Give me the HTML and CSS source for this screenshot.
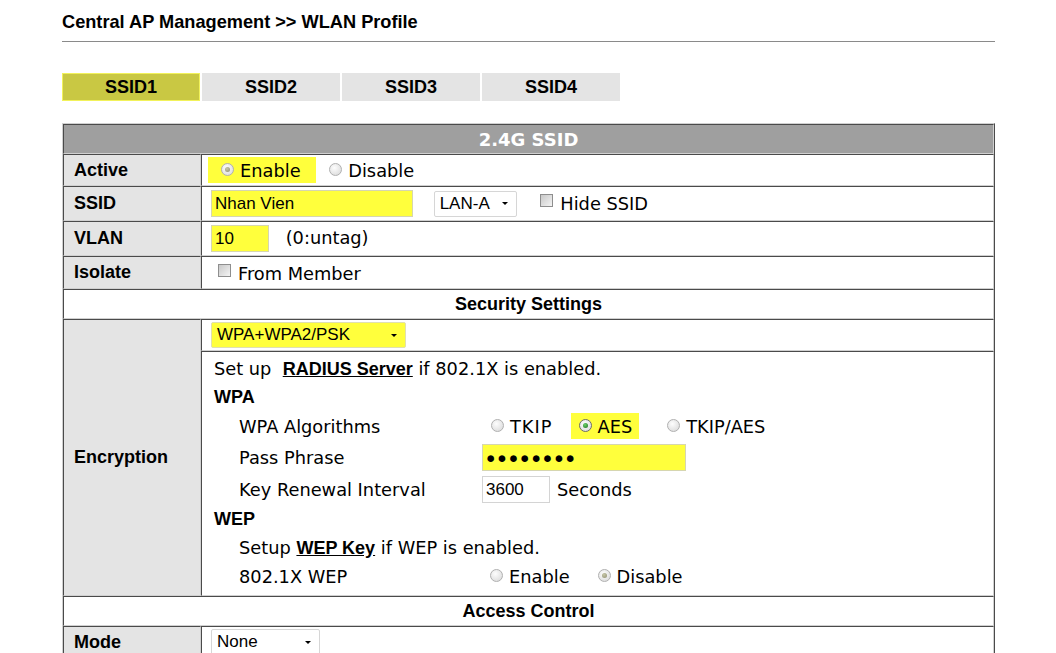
FILE: index.html
```html
<!DOCTYPE html>
<html lang="en">
<head>
    <meta charset="UTF-8" />
    <title>WLAN Profile</title>
    <link rel="stylesheet" href="styles.css">
</head>
<body>
    <div class="page">
        <div class="title">Central AP Management &gt;&gt; WLAN Profile</div>

        <div class="tabs">
            <div class="tab current">SSID1</div>
            <div class="tab">SSID2</div>
            <div class="tab">SSID3</div>
            <div class="tab">SSID4</div>
        </div>

        <table class="profile">
            <tr class="r-head">
                <td colspan="2" class="head">2.4G SSID</td>
            </tr>
            <tr class="r-active">
                <td class="label">Active</td>
                <td class="value">
                    <span class="hl hl-active"><span class="radio on dim"></span>Enable</span>
                    <span class="opt"><span class="radio"></span>Disable</span>
                </td>
            </tr>
            <tr class="r-ssid">
                <td class="label">SSID</td>
                <td class="value">
                    <span class="field yellow w-ssid">Nhan Vien</span>
                    <span class="select w-lan">LAN-A<span class="arrow"></span></span>
                    <span class="opt"><span class="check"></span>Hide SSID</span>
                </td>
            </tr>
            <tr class="r-vlan">
                <td class="label">VLAN</td>
                <td class="value">
                    <span class="field yellow w-vlan">10</span>
                    <span class="note">(0:untag)</span>
                </td>
            </tr>
            <tr class="r-isolate">
                <td class="label">Isolate</td>
                <td class="value">
                    <span class="opt first"><span class="check"></span>From Member</span>
                </td>
            </tr>
            <tr class="r-section">
                <td colspan="2" class="section">Security Settings</td>
            </tr>
            <tr class="r-enc">
                <td class="label" rowspan="2">Encryption</td>
                <td class="value">
                    <span class="select yellow w-enc">WPA+WPA2/PSK<span class="arrow"></span></span>
                </td>
            </tr>
            <tr class="r-detail">
                <td class="value detail">
                    <div class="line">Set up &nbsp;<a>RADIUS Server</a> if 802.1X is enabled.</div>
                    <div class="line sub">WPA</div>
                    <div class="pair p-alg">
                        <span class="key">WPA Algorithms</span>
                        <span class="opts">
                            <span class="opt o-tkip"><span class="radio"></span>TKIP</span>
                            <span class="hl hl-aes"><span class="radio on green"></span>AES</span>
                            <span class="opt"><span class="radio"></span>TKIP/AES</span>
                        </span>
                    </div>
                    <div class="pair">
                        <span class="key">Pass Phrase</span>
                        <span class="field yellow w-pass">&#9679;&#9679;&#9679;&#9679;&#9679;&#9679;&#9679;&#9679;</span>
                    </div>
                    <div class="pair">
                        <span class="key">Key Renewal Interval</span>
                        <span class="opts"><span class="field w-key">3600</span><span class="unit">Seconds</span></span>
                    </div>
                    <div class="line sub">WEP</div>
                    <div class="line indent l-wep">Setup <a>WEP Key</a> if WEP is enabled.</div>
                    <div class="pair p-wep">
                        <span class="key">802.1X WEP</span>
                        <span class="opts wep">
                            <span class="opt"><span class="radio"></span>Enable</span>
                            <span class="opt"><span class="radio on dim"></span>Disable</span>
                        </span>
                    </div>
                </td>
            </tr>
            <tr class="r-section">
                <td colspan="2" class="section">Access Control</td>
            </tr>
            <tr class="r-mode">
                <td class="label">Mode</td>
                <td class="value">
                    <span class="select w-mode">None<span class="arrow"></span></span>
                </td>
            </tr>
        </table>
    </div>
</body>
</html>
```

FILE: styles.css
```css
body {
    margin: 0;
    background-color: #fff;
    color: #000;
    font-family: "Liberation Sans", Arial, sans-serif;
}
.page {
    width: 933px;
    padding: 10px 0 0 62px;
}
.title {
    font-size: 18.2px;
    font-weight: bold;
    height: 24px;
    line-height: 24px;
    padding-bottom: 7px;
    border-bottom: 1px solid #8a8a8a;
}

/* ssid tabs */
.tabs {
    display: flex;
    gap: 2px;
    margin-top: 31px;
}
.tab {
    width: 138px;
    height: 28px;
    line-height: 28px;
    text-align: center;
    font-size: 18px;
    font-weight: bold;
    background-color: #e4e4e4;
    box-sizing: border-box;
}
.tab.current {
    background-color: #c9c843;
    border: 1px solid #f2f25a;
    line-height: 26px;
}

/* profile table */
.profile {
    width: 933px;
    margin-top: 22px;
    border-collapse: separate;
    border-spacing: 0;
    border: 1px solid;
    border-color: #d0d0d0 #4a4a4a #4a4a4a #d0d0d0;
}
.profile td {
    padding: 0;
    border: 1px solid;
    border-color: #4a4a4a #d0d0d0 #d0d0d0 #4a4a4a;
    vertical-align: middle;
}
.head {
    background-color: #9f9f9f;
    color: #fff;
    text-align: center;
    font-family: "DejaVu Sans", Verdana, sans-serif;
    font-size: 18px;
    font-weight: bold;
}
.label {
    width: 126px;
    padding-left: 10px !important;
    background-color: #e4e4e4;
    font-size: 18px;
    font-weight: bold;
}
.section {
    text-align: center;
    font-size: 18px;
    font-weight: bold;
}
.value {
    padding-left: 6px !important;
    font-family: "DejaVu Sans", Verdana, sans-serif;
    font-size: 17.8px;
    white-space: nowrap;
}

.r-head { height: 30px; }
.r-active { height: 32px; }
.r-ssid { height: 35px; }
.r-vlan { height: 35px; }
.r-isolate { height: 33px; }
.r-section { height: 30px; }
.r-enc { height: 32px; }
.r-detail { height: 245px; }
.r-mode { height: 32px; }

/* controls */
.hl {
    display: inline-flex;
    align-items: center;
    background-color: #ffff3c;
    height: 26px;
    vertical-align: middle;
}
.hl-active {
    padding: 0 15px 0 13px;
}
.hl-aes {
    padding: 0 7px 0 8px;
    margin-right: 20px;
}
.opt {
    display: inline-flex;
    align-items: center;
    vertical-align: middle;
    margin-left: 8px;
}
.opt.first {
    margin-left: 10px;
}
.radio {
    display: inline-block;
    width: 11px;
    height: 11px;
    border: 1px solid #b0b0b0;
    border-radius: 50%;
    background: radial-gradient(circle at 40% 35%, #fdfdfd, #d6d6d6);
    margin-right: 6px;
    position: relative;
    top: -1px;
}
.radio.on::after {
    content: "";
    position: absolute;
    left: 3px;
    top: 3px;
    width: 5px;
    height: 5px;
    border-radius: 50%;
}
.radio.dim::after {
    background: radial-gradient(circle at 40% 35%, #c7c7a8, #8d8d70);
}
.radio.green {
    border-color: #6c6c6c;
}
.radio.green::after {
    background: radial-gradient(circle at 40% 35%, #6bd36b, #1d6f1d);
}
.check {
    display: inline-block;
    width: 11px;
    height: 11px;
    border: 1px solid #8e8e8e;
    background: linear-gradient(135deg, #c8c8c8, #f4f4f4);
    margin-right: 7px;
    position: relative;
    top: -3px;
}
.field {
    display: inline-block;
    box-sizing: border-box;
    height: 27px;
    line-height: 25px;
    padding-left: 3px;
    border: 1px solid #d4d4d4;
    background-color: #fff;
    vertical-align: middle;
    font-family: "Liberation Sans", Arial, sans-serif;
    font-size: 17px;
}
.field.yellow {
    background-color: #ffff3c;
    border-color: #d6d6b0;
}
.w-ssid {
    width: 202px;
    margin-left: 3px;
}
.w-vlan {
    width: 58px;
    margin-left: 3px;
}
.w-pass {
    width: 204px;
    font-size: 15.5px;
    letter-spacing: 2px;
}
.w-key {
    width: 68px;
}
.select {
    display: inline-flex;
    align-items: center;
    justify-content: space-between;
    box-sizing: border-box;
    height: 26px;
    padding: 0 8px 0 5px;
    border: 1px solid #d6d6d6;
    border-radius: 2px;
    background-color: #fff;
    vertical-align: middle;
    font-family: "Liberation Sans", Arial, sans-serif;
    font-size: 17px;
}
.select.yellow {
    background-color: #ffff3c;
    border-color: #e0e0b0;
}
.arrow {
    width: 0;
    height: 0;
    border-left: 3px solid transparent;
    border-right: 3px solid transparent;
    border-top: 3px solid #000;
}
.w-lan {
    width: 83px;
    margin-left: 15px;
    margin-right: 10px;
}
.w-enc {
    width: 195px;
    margin-left: 3px;
}
.w-mode {
    width: 109px;
    margin-left: 3px;
}
.note {
    margin-left: 11px;
}

/* encryption detail block */
.detail {
    padding: 3px 0 4px 12px !important;
    vertical-align: top !important;
}
.line {
    height: 28px;
    line-height: 28px;
}
.line.sub {
    font-family: "Liberation Sans", Arial, sans-serif;
    font-weight: bold;
    font-size: 18px;
}
.line.indent {
    padding-left: 25px;
}
.line.l-wep {
    height: 29px;
    line-height: 29px;
}
.detail a {
    font-family: "Liberation Sans", Arial, sans-serif;
    font-weight: bold;
    font-size: 18px;
    text-decoration: underline;
}
.pair {
    display: flex;
    align-items: center;
    height: 32px;
}
.pair.p-alg {
    height: 30px;
}
.pair.p-wep {
    height: 29px;
}
.key {
    width: 243px;
    padding-left: 25px;
}
.opts {
    display: flex;
    align-items: center;
}
.opts .opt {
    margin-left: 8px;
    margin-right: 18px;
}
.opts .opt.o-tkip {
    margin-left: 9px;
    margin-right: 18px;
    letter-spacing: 1px;
}
.opts.wep .opt {
    margin-left: 8px;
    margin-right: 20px;
}
.unit {
    margin-left: 7px;
}
```
